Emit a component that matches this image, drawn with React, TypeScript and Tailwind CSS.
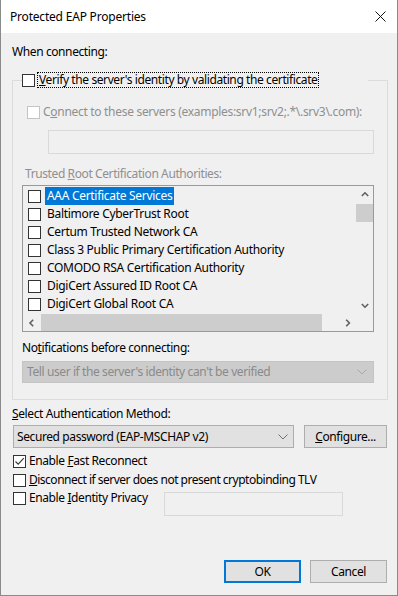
import React from "react";

function Box({ checked = false, disabled = false }: { checked?: boolean; disabled?: boolean }) {
  return (
    <span
      className={
        disabled
          ? "w-[13px] h-[13px] shrink-0 border border-[#c4c4c4] bg-white flex items-center justify-center"
          : "w-[13px] h-[13px] shrink-0 border border-[#333333] bg-white flex items-center justify-center"
      }
    >
      {checked && (
        <svg width="11" height="11" viewBox="0 0 11 11">
          <path d="M1.5 5.5 L4.2 8.2 L9.8 2.2" stroke="#333333" strokeWidth="1.1" fill="none" />
        </svg>
      )}
    </span>
  );
}

function Chevron({ dir, color = "#606060" }: { dir: "up" | "down" | "left" | "right"; color?: string }) {
  const d =
    dir === "up"
      ? "M0.8 5 L4 1.8 L7.2 5"
      : dir === "down"
      ? "M0.8 2 L4 5.2 L7.2 2"
      : dir === "left"
      ? "M5.2 0.8 L2 4 L5.2 7.2"
      : "M2.2 0.8 L5.4 4 L2.2 7.2";
  const w = dir === "up" || dir === "down" ? 8 : 7;
  const h = dir === "up" || dir === "down" ? 7 : 8;
  return (
    <svg width={w} height={h} viewBox={`0 0 ${w} ${h}`}>
      <path d={d} stroke={color} strokeWidth="1.6" fill="none" />
    </svg>
  );
}

function ThinChevron({ color }: { color: string }) {
  return (
    <svg width="10" height="6" viewBox="0 0 10 6">
      <path d="M0.5 0.5 L5 5 L9.5 0.5" stroke={color} strokeWidth="1" fill="none" />
    </svg>
  );
}

const certs = [
  "AAA Certificate Services",
  "Baltimore CyberTrust Root",
  "Certum Trusted Network CA",
  "Class 3 Public Primary Certification Authority",
  "COMODO RSA Certification Authority",
  "DigiCert Assured ID Root CA",
  "DigiCert Global Root CA",
];

export default function App() {
  return (
    <div className="w-[398px] h-[596px] flex flex-col border-x border-b border-[#8a8a8a] bg-[#f0f0f0] font-['Noto_Sans',sans-serif] text-[12px] leading-[16px] tracking-[-0.4px] text-black">
      {/* Title bar */}
      <div className="h-[33px] shrink-0 bg-white flex items-center justify-between pl-[9px] pr-[11px]">
        <span className="tracking-[-0.2px] pt-[1px]">Protected EAP Properties</span>
        <svg width="11" height="11" viewBox="0 0 11 11">
          <path d="M0.5 0.5 L10.5 10.5 M10.5 0.5 L0.5 10.5" stroke="#111" strokeWidth="1" fill="none" />
        </svg>
      </div>

      {/* Body */}
      <div className="flex-1 flex flex-col pl-[11px] pt-[11px]">
        <div>When connecting:</div>

        <fieldset className="mt-[12px] w-[376px] border border-[#dcdcdc] pl-[9px] pr-[13px] pb-[16px]">
          <legend className="w-[346px] bg-[#f0f0f0]">
            <div className="flex items-center h-[16px]">
              <Box />
              <span className="ml-[2px] h-[16px] pl-[1px] pr-[1px] border border-dotted border-black flex items-center">
                <span>
                  <span className="underline">V</span>erify the server's identity by validating the certificate
                </span>
              </span>
            </div>
          </legend>

          <div className="mt-[16px] pl-[5px] flex items-center h-[16px] text-[#8f8f8f]">
            <Box disabled />
            <span className="ml-[3px] whitespace-nowrap tracking-[-0.3px]">
              C<span className="underline">o</span>nnect to these servers (examples:srv1;srv2;.*{"\\"}.srv3{"\\"}.com):
            </span>
          </div>

          <div className="mt-[10px] ml-[26px] w-[326px] h-[24px] border border-[#d9d9d9] bg-[#f0f0f0]" />

          <div className="mt-[12px] pl-[3px] text-[#8f8f8f] whitespace-nowrap">
            Trusted <span className="underline">R</span>oot Certification Authorities:
          </div>

          {/* List view */}
          <div className="mt-[3px] w-[352px] h-[147px] border border-[#999999] bg-[#f0f0f0] grid grid-cols-[333px_17px] grid-rows-[128px_17px]">
            <div className="overflow-hidden pt-[1px]">
              {certs.map((c, i) => (
                <div key={c} className="h-[18px] flex items-center pl-[5px] whitespace-nowrap tracking-[-0.3px]">
                  <Box />
                  {i === 0 ? (
                    <span className="ml-[4px] h-[18px] px-[2px] flex items-center bg-[#0078d7] text-white">{c}</span>
                  ) : (
                    <span className="ml-[4px] px-[2px]">{c}</span>
                  )}
                </div>
              ))}
            </div>
            <div className="flex flex-col">
              <div className="h-[17px] flex items-center justify-center">
                <Chevron dir="up" />
              </div>
              <div className="mt-[1px] h-[18px] bg-[#cdcdcd]" />
              <div className="flex-1" />
              <div className="h-[17px] flex items-center justify-center">
                <Chevron dir="down" />
              </div>
            </div>
            <div className="flex">
              <div className="w-[17px] flex items-center justify-center">
                <Chevron dir="left" />
              </div>
              <div className="ml-[1px] w-[281px] bg-[#cdcdcd]" />
              <div className="flex-1" />
              <div className="w-[17px] flex items-center justify-center">
                <Chevron dir="right" />
              </div>
            </div>
            <div />
          </div>

          <div className="mt-[8px] whitespace-nowrap">
            No<span className="underline">t</span>ifications before connecting:
          </div>

          <div className="mt-[5px] w-[352px] h-[22px] bg-[#cccccc] border border-[#c4c4c4] flex items-center justify-between pl-[4px] pr-[6px] text-[#8a8a8a]">
            <span className="whitespace-nowrap">Tell user if the server's identity can't be verified</span>
            <ThinChevron color="#a8a8a8" />
          </div>
        </fieldset>

        <div className="mt-[6px] whitespace-nowrap">
          <span className="underline">S</span>elect Authentication Method:
        </div>

        <div className="mt-[3px] flex">
          <div className="ml-[1px] w-[281px] h-[23px] bg-[#e1e1e1] border border-[#adadad] flex items-center justify-between pl-[3px] pr-[5px]">
            <span className="whitespace-nowrap">Secured password (EAP-MSCHAP v2)</span>
            <ThinChevron color="#707070" />
          </div>
          <div className="ml-[10px] w-[83px] h-[23px] bg-[#e1e1e1] border border-[#adadad] flex items-center justify-center">
            <span>
              <span className="underline">C</span>onfigure...
            </span>
          </div>
        </div>

        <div className="mt-[5px] ml-[1px] flex items-center h-[16px]">
          <Box checked />
          <span className="ml-[3px]">
            Enable <span className="underline">F</span>ast Reconnect
          </span>
        </div>
        <div className="mt-[3px] ml-[1px] flex items-center h-[16px]">
          <Box />
          <span className="ml-[3px] whitespace-nowrap tracking-[-0.5px]">
            <span className="underline">D</span>isconnect if server does not present cryptobinding TLV
          </span>
        </div>
        <div className="mt-[2px] ml-[1px] flex items-start">
          <div className="w-[151px] flex items-center h-[16px]">
            <Box />
            <span className="ml-[3px] whitespace-nowrap">
              Enable <span className="underline">I</span>dentity Privacy
            </span>
          </div>
          <div className="mt-[2px] w-[179px] h-[24px] border border-[#d9d9d9] bg-[#f0f0f0]" />
        </div>

        <div className="mt-auto pb-[12px] pr-[10px] flex justify-end gap-[9px]">
          <div className="w-[77px] h-[23px] border-2 border-[#0078d7] bg-[#e1e1e1] flex items-center justify-center">
            OK
          </div>
          <div className="w-[77px] h-[23px] border border-[#adadad] bg-[#e1e1e1] flex items-center justify-center">
            Cancel
          </div>
        </div>
      </div>
    </div>
  );
}
